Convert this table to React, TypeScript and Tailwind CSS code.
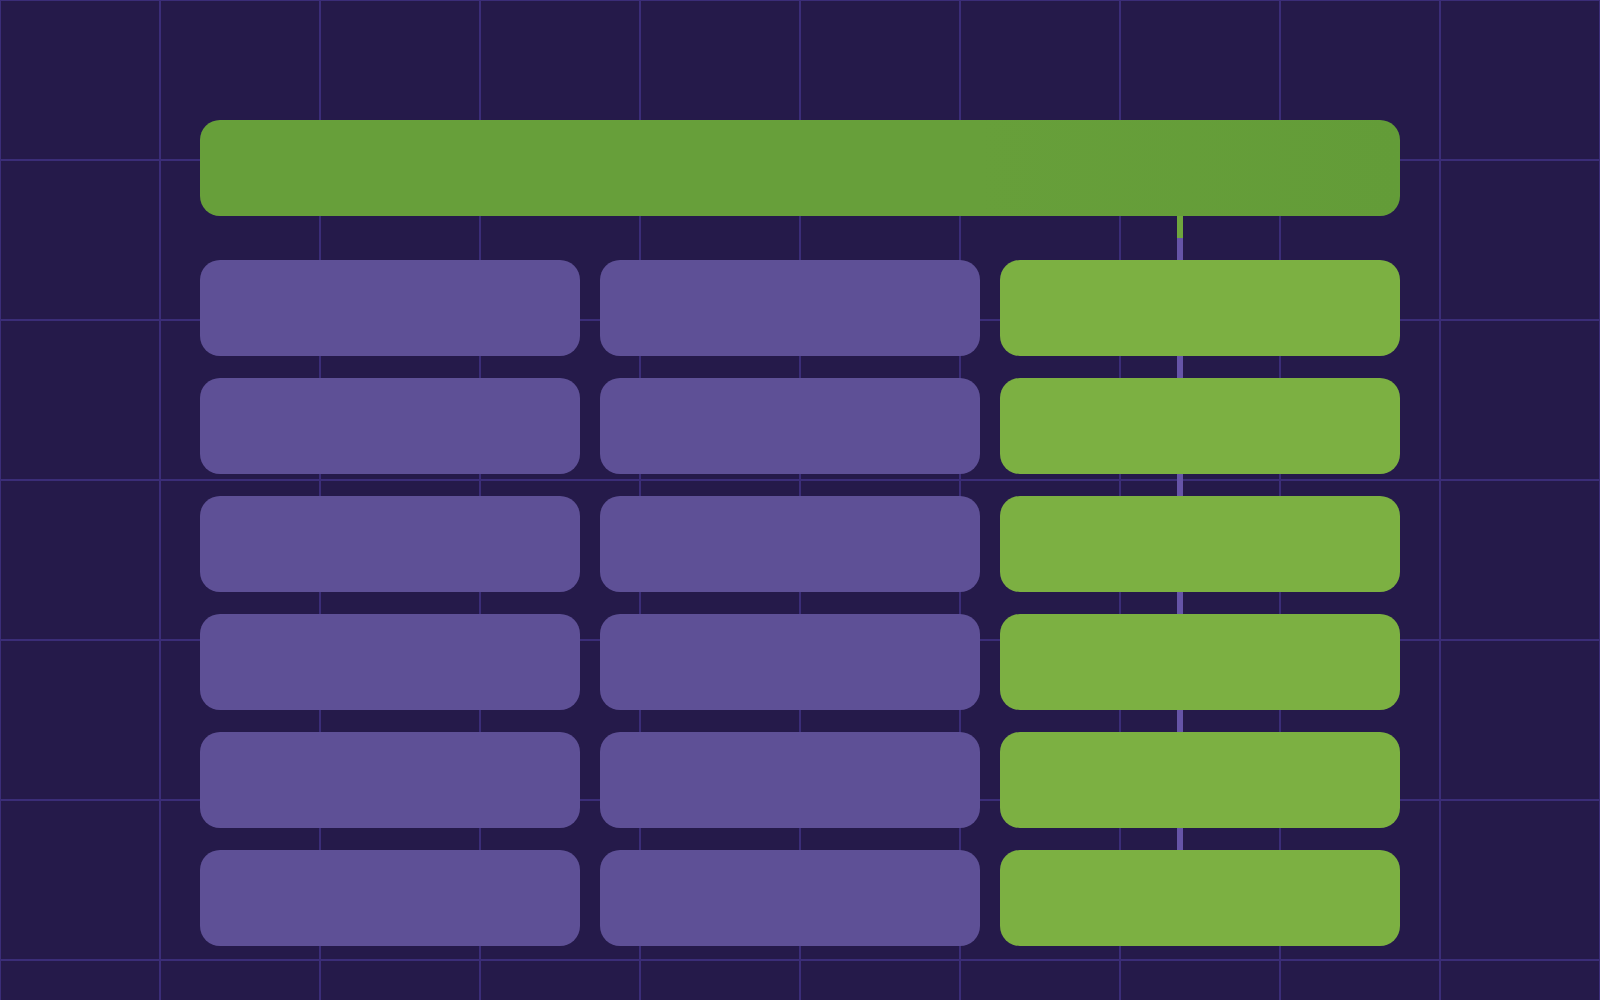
const rows = [0, 1, 2, 3, 4, 5];

const App = () => {
  return (
    <div className="w-[1600px] h-[1000px] overflow-hidden bg-[#251a4a] bg-[linear-gradient(to_right,#3b2d78_2px,transparent_2px),linear-gradient(to_bottom,#3b2d78_2px,transparent_2px)] bg-[size:160px_160px] bg-[position:-1px_-1px]">
      <div className="relative ml-[200px] pt-[120px] w-[1200px]">
        {/* connector behind the cards */}
        <div className="absolute left-[977px] top-[216px] w-1.5 h-[634px] flex flex-col">
          <div className="h-[22px] bg-[#6fa63d]" />
          <div className="flex-1 bg-[#6654a8]" />
        </div>

        <div className="relative h-24 rounded-[20px] bg-[linear-gradient(to_right,#679f3a,#679f3a_65%,#639c38)]" />

        <div className="relative mt-11 grid grid-cols-[380px_380px_400px] gap-x-5 gap-y-[22px]">
          {rows.map((r) => (
            <div key={r} className="contents">
              <div className="h-24 rounded-[20px] bg-[#5e5096]" />
              <div className="h-24 rounded-[20px] bg-[#5e5096]" />
              <div className="h-24 rounded-[20px] bg-[#7cb042]" />
            </div>
          ))}
        </div>
      </div>
    </div>
  );
};

export default App;
